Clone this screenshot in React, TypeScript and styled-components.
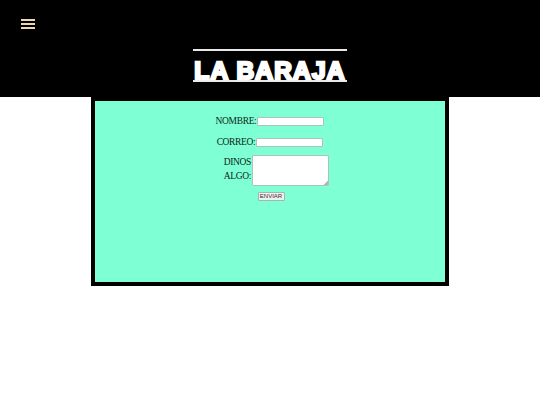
import React from 'react';
import styled, { createGlobalStyle } from 'styled-components';

const GlobalStyle = createGlobalStyle`
  html, body {
    margin: 0;
    padding: 0;
    background: #fff;
  }
`;

const Header = styled.header`
  height: 97px;
  background: #000;
  display: flex;
  flex-direction: column;
  align-items: center;
  padding-top: 49px;
  box-sizing: border-box;
  position: relative;
`;

const MenuButton = styled.button`
  position: absolute;
  left: 21px;
  top: 19px;
  width: 14px;
  height: 10px;
  padding: 0;
  border: 0;
  background: transparent;
  display: flex;
  flex-direction: column;
  justify-content: space-between;
`;

const MenuLine = styled.span`
  display: block;
  height: 2px;
  background: #ead9b0;
`;

const Logo = styled.h1`
  margin: 0;
  width: 154px;
  height: 33px;
  box-sizing: border-box;
  border-top: 2px solid #e8e8e8;
  border-bottom: 2px solid #e8e8e8;
  color: #fff;
  font-family: "Liberation Sans", Arial, sans-serif;
  font-size: 24.5px;
  font-weight: 700;
  line-height: 39px;
  text-align: center;
  white-space: nowrap;
  -webkit-text-stroke: 2.4px #fff;
  letter-spacing: 1.2px;
`;

const Panel = styled.main`
  width: 358px;
  height: 189px;
  margin: 0 auto;
  box-sizing: border-box;
  border: 4px solid #000;
  background: #7fffd4;
  padding-top: 14px;
`;

const Form = styled.form`
  display: flex;
  flex-direction: column;
  align-items: center;
  font-family: "Liberation Serif", "Times New Roman", serif;
  font-size: 9.5px;
  letter-spacing: -0.35px;
  color: #0c1f1a;
`;

const Row = styled.div`
  display: flex;
  align-items: center;
  height: 13px;
  margin-bottom: 8px;
`;

const RowLabel = styled.label`
  padding-bottom: 2px;
`;

const TextInput = styled.input`
  width: 67px;
  height: 9px;
  box-sizing: border-box;
  margin-left: 1px;
  padding: 0;
  background: #fff;
  border: 1px solid #aac4ba;
  border-radius: 1px;
`;

const AreaRow = styled.div`
  display: flex;
  align-items: flex-start;
  margin-top: -2px;
  margin-left: 12px;
  margin-bottom: 6px;
`;

const AreaLabel = styled.label`
  width: 28px;
  text-align: right;
  line-height: 14px;
  margin-right: 1px;
`;

const TextArea = styled.textarea`
  width: 77px;
  height: 31px;
  box-sizing: border-box;
  margin: 0;
  padding: 0;
  background: #fff;
  border: 1px solid #aac4ba;
  border-radius: 1px;
  display: block;

  &::-webkit-resizer {
    background: linear-gradient(135deg, transparent 50%, #b5b5b5 50%) no-repeat right bottom / 4px 4px;
  }
`;

const SendButton = styled.button`
  width: 27px;
  height: 9px;
  box-sizing: border-box;
  padding: 0;
  margin-left: 2px;
  background: #efefef;
  border: 1px solid #a5b5af;
  border-radius: 1px;
  font-family: "Liberation Sans", Arial, sans-serif;
  font-size: 6px;
  line-height: 7px;
  color: #333;
`;

export default function App() {
  return (
    <>
      <GlobalStyle />
      <Header>
        <MenuButton aria-label="Menu">
          <MenuLine />
          <MenuLine />
          <MenuLine />
        </MenuButton>
        <Logo>LA BARAJA</Logo>
      </Header>
      <Panel>
        <Form onSubmit={(e) => e.preventDefault()}>
          <Row>
            <RowLabel>NOMBRE:</RowLabel>
            <TextInput type="text" />
          </Row>
          <Row>
            <RowLabel>CORREO:</RowLabel>
            <TextInput type="text" />
          </Row>
          <AreaRow>
            <AreaLabel>DINOS ALGO:</AreaLabel>
            <TextArea />
          </AreaRow>
          <SendButton type="submit">ENVIAR</SendButton>
        </Form>
      </Panel>
    </>
  );
}
